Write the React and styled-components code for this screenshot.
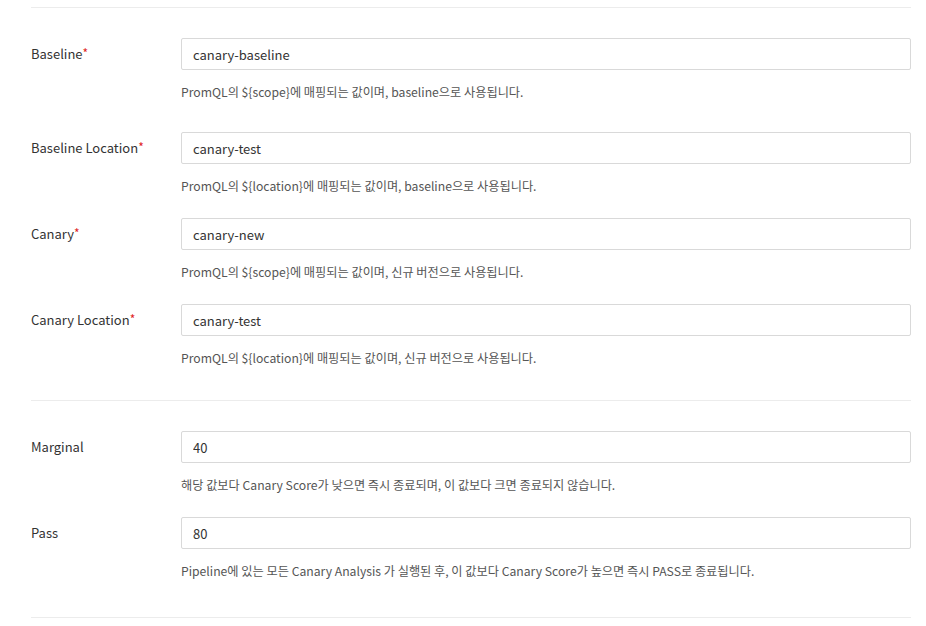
import React from "react";
import styled, { createGlobalStyle } from "styled-components";

const Global = createGlobalStyle`
  html, body { margin: 0; padding: 0; background: #fff; }
  body { font-family: "Noto Sans CJK KR", "Noto Sans", sans-serif; color: #333; }
  * { box-sizing: border-box; }
`;

const Page = styled.div`
  padding: 7px 15px 0 31px;
`;

const Section = styled.section`
  border-top: 1px solid #ececec;
  padding-top: 30px;
  padding-bottom: ${(p) => p.$bottom}px;
`;

const Row = styled.div`
  display: grid;
  grid-template-columns: 150px 1fr;
  margin-bottom: ${(p) => p.$gap ?? 23}px;
  &:last-child { margin-bottom: 0; }
`;

const Label = styled.label`
  height: 32px;
  padding-bottom: 2px;
  display: flex;
  align-items: center;
  font-size: 13px;
  color: #333;
`;

const Required = styled.span`
  color: #e02424;
  font-size: 12px;
  align-self: flex-start;
  margin-top: 6px;
`;

const Field = styled.div`
  display: flex;
  flex-direction: column;
`;

const Input = styled.input`
  height: 32px;
  width: 100%;
  border: 1px solid #d9d9d9;
  border-radius: 2px;
  padding: 0 11px;
  font-family: inherit;
  font-size: 13px;
  color: #333;
  background: #fff;
  outline: none;
`;

const Help = styled.div`
  margin-top: 13px;
  font-size: 12.2px;
  line-height: 18px;
  color: #555;
`;

const FormRow = ({ label, required, value, help, gap }) => (
  <Row $gap={gap}>
    <Label>
      {label}
      {required && <Required>*</Required>}
    </Label>
    <Field>
      <Input defaultValue={value} />
      <Help>{help}</Help>
    </Field>
  </Row>
);

export default function App() {
  return (
    <>
      <Global />
      <Page>
        <Section $bottom={33}>
          <FormRow
            label="Baseline"
            required
            value="canary-baseline"
            help="PromQL의 ${scope}에 매핑되는 값이며, baseline으로 사용됩니다."
            gap={31}
          />
          <FormRow
            label="Baseline Location"
            required
            value="canary-test"
            help="PromQL의 ${location}에 매핑되는 값이며, baseline으로 사용됩니다."
          />
          <FormRow
            label="Canary"
            required
            value="canary-new"
            help="PromQL의 ${scope}에 매핑되는 값이며, 신규 버전으로 사용됩니다."
          />
          <FormRow
            label="Canary Location"
            required
            value="canary-test"
            help="PromQL의 ${location}에 매핑되는 값이며, 신규 버전으로 사용됩니다."
          />
        </Section>
        <Section $bottom={37}>
          <FormRow
            label="Marginal"
            value="40"
            help="해당 값보다 Canary Score가 낮으면 즉시 종료되며, 이 값보다 크면 종료되지 않습니다."
          />
          <FormRow
            label="Pass"
            value="80"
            help="Pipeline에 있는 모든 Canary Analysis 가 실행된 후, 이 값보다 Canary Score가 높으면 즉시 PASS로 종료됩니다."
          />
        </Section>
        <Section $bottom={0} />
      </Page>
    </>
  );
}
